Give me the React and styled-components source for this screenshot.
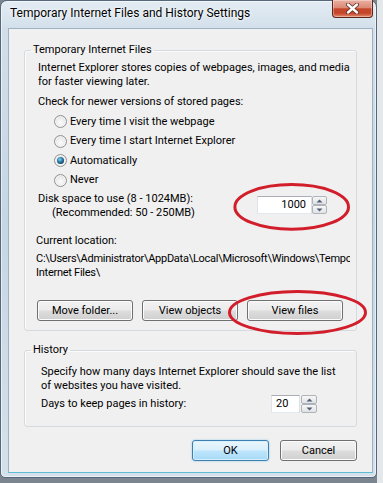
import React from "react";
import styled, { createGlobalStyle, css } from "styled-components";

const GlobalStyle = createGlobalStyle`
  html, body {
    margin: 0;
    height: 483px;
  }
  body {
    background: linear-gradient(to right, #7a858f 0, #7a858f 377px, #e4e8eb 377px);
    font-family: Roboto, "Liberation Sans", sans-serif;
    font-size: 11px;
    line-height: 14px;
    color: #000;
  }
`;

const Window = styled.div`
  position: relative;
  width: 377px;
  box-sizing: border-box;
  border: 1px solid #56687a;
  border-radius: 7px 7px 5px 5px;
  padding: 0 3px 4px 7px;
  background: linear-gradient(to bottom, #e3ecf3 0px, #d2dfea 28px, #c6d6e3 220px, #d4e1eb 100%);
  box-shadow: inset 0 0 0 1px rgba(255, 255, 255, 0.55);
`;

const TitleBar = styled.div`
  height: 27px;
  display: flex;
  align-items: flex-start;
  justify-content: space-between;
  margin-right: -2px;
`;

const Title = styled.span`
  font-size: 12px;
  line-height: 14px;
  padding: 5px 0 0 2px;
  text-shadow: 0 0 5px #fff, 0 0 2px #fff;
`;

const CloseButton = styled.div`
  width: 41px;
  height: 18px;
  margin: -1px 2px 0 0;
  box-sizing: border-box;
  border: 1px solid #5e2519;
  border-top: none;
  border-radius: 0 0 4px 4px;
  background: linear-gradient(to bottom, #eab0a2 0%, #dc8a76 45%, #c4462b 52%, #c6482c 78%, #e18a6d 100%);
  box-shadow: inset 0 0 0 1px rgba(255, 255, 255, 0.35);
  display: flex;
  align-items: center;
  justify-content: center;
`;

const Client = styled.div`
  background: #f0f0f0;
  border: 1px solid #9fb2c3;
  border-bottom-color: #5bbdd4;
  padding: 14px 15px 11px;
`;

const Group = styled.fieldset`
  margin: ${(p) => p.$top || 0}px 0 0;
  padding: 0;
  min-width: 0;
  border: 1px solid #d3dbe1;
  border-radius: 3px;
  box-shadow: inset 1px 1px 0 #fbfbfb;
`;

const Legend = styled.legend`
  margin-left: 6px;
  padding: 0 2px;
  line-height: 14px;
`;

const GroupBody = styled.div`
  padding: ${(p) => p.$pad};
`;

const Line = styled.div`
  white-space: nowrap;
  margin-top: ${(p) => p.$top || 0}px;
  padding-left: ${(p) => p.$indent || 0}px;
`;

const RadioList = styled.div`
  margin-top: 2.75px;
`;

const RadioRow = styled.div`
  display: flex;
  align-items: center;
  gap: 3px;
  height: 19.5px;
  padding-left: 16px;
`;

const RadioDot = styled.span`
  position: relative;
  width: 13px;
  height: 13px;
  box-sizing: border-box;
  border-radius: 50%;
  border: 1px solid #929292;
  background: radial-gradient(circle at 50% 60%, #fbfbfb 0, #eeeeee 45%, #d4d4d4 100%);
  box-shadow: inset 0 0 0 1px #f4f4f4;
  ${(p) =>
    p.$checked &&
    css`
      &::after {
        content: "";
        position: absolute;
        left: 2px;
        top: 2px;
        width: 7px;
        height: 7px;
        border-radius: 50%;
        background: radial-gradient(circle at 40% 35%, #86d3f2 0, #2d7eab 40%, #0b2f4a 85%);
      }
    `}
`;

const SpaceRow = styled.div`
  display: flex;
  margin-top: 2.5px;
`;

const Spin = styled.div`
  display: flex;
  height: 18px;
  margin: ${(p) => p.$margin};
`;

const SpinField = styled.div`
  width: ${(p) => p.$w}px;
  box-sizing: border-box;
  border: 1px solid #abadb3;
  border-color: #abadb3 #dbdfe6 #e3e9ef #e2e3ea;
  background: #fff;
  line-height: 16px;
  text-align: ${(p) => p.$align};
  padding: 0 ${(p) => (p.$align === "right" ? 5 : 0)}px 0 ${(p) => (p.$align === "left" ? 4 : 0)}px;
`;

const SpinButtons = styled.div`
  display: flex;
  flex-direction: column;
  width: ${(p) => p.$w}px;
  margin-left: ${(p) => p.$gap || 0}px;
`;

const SpinBtn = styled.div`
  flex: 1;
  box-sizing: border-box;
  border: 1px solid #aeb4bb;
  border-radius: 2px;
  background: linear-gradient(to bottom, #f7f7f7, #e2e2e2);
  display: flex;
  align-items: center;
  justify-content: center;
`;

const Location = styled.div`
  margin: 14px 0 0 -2px;
`;

const PathText = styled.div`
  margin-top: 4px;
  width: 314px;
  overflow: hidden;
  letter-spacing: -0.26px;
`;

const ButtonRow = styled.div`
  display: flex;
  gap: ${(p) => p.$gap}px;
  margin: ${(p) => p.$margin};
  justify-content: ${(p) => p.$justify || "flex-start"};
`;

const Button = styled.div`
  width: ${(p) => p.$w}px;
  height: 21px;
  box-sizing: border-box;
  border: 1px solid #707070;
  border-radius: 3px;
  background: linear-gradient(to bottom, #f2f2f2 0%, #ebebeb 48%, #dddddd 52%, #cfcfcf 100%);
  box-shadow: inset 0 0 0 1px #fbfbfb;
  display: flex;
  align-items: center;
  justify-content: center;
  line-height: 14px;
  ${(p) =>
    p.$default &&
    css`
      border-color: #3c7fb1;
      background: linear-gradient(to bottom, #eaf6fd 0%, #d9f0fc 48%, #bee6fd 52%, #a7d9f5 100%);
      box-shadow: inset 0 0 0 1px #d7f0fc, 0 0 2px rgba(76, 170, 220, 0.6);
    `}
`;

const DaysRow = styled.div`
  display: flex;
  align-items: center;
  height: 18px;
  margin-top: 2px;
`;

const Marks = styled.svg`
  position: absolute;
  left: -1px;
  top: -1px;
  pointer-events: none;
`;

const Arrow = ({ up }) => (
  <svg width="7" height="4" viewBox="0 0 7 4">
    <path d={up ? "M0.5 3.5 L3.5 0.5 L6.5 3.5 Z" : "M0.5 0.5 L3.5 3.5 L6.5 0.5 Z"} fill="#4d5f7a" />
  </svg>
);

const Spinner = ({ value, field, buttons, gap, align, margin }) => (
  <Spin $margin={margin}>
    <SpinField $w={field} $align={align}>
      {value}
    </SpinField>
    <SpinButtons $w={buttons} $gap={gap}>
      <SpinBtn>
        <Arrow up />
      </SpinBtn>
      <SpinBtn>
        <Arrow />
      </SpinBtn>
    </SpinButtons>
  </Spin>
);

const radios = [
  ["Every time I visit the webpage", false],
  ["Every time I start Internet Explorer", false],
  ["Automatically", true],
  ["Never", false],
];

export default function App() {
  return (
    <>
      <GlobalStyle />
      <Window>
        <TitleBar>
          <Title>Temporary Internet Files and History Settings</Title>
          <CloseButton>
            <svg width="15" height="11" viewBox="0 0 15 11">
              <path d="M3 1.5 L12 9.5 M12 1.5 L3 9.5" stroke="#5a2a22" strokeWidth="4" strokeLinecap="round" />
              <path d="M3 1.5 L12 9.5 M12 1.5 L3 9.5" stroke="#fff" strokeWidth="2.4" strokeLinecap="round" />
            </svg>
          </CloseButton>
        </TitleBar>
        <Client>
          <Group>
            <Legend>Temporary Internet Files</Legend>
            <GroupBody $pad="4px 13px 9px 13px">
              <Line>Internet Explorer stores copies of webpages, images, and media</Line>
              <Line>for faster viewing later.</Line>
              <Line $top={6}>Check for newer versions of stored pages:</Line>
              <RadioList>
                {radios.map(([label, checked]) => (
                  <RadioRow key={label}>
                    <RadioDot $checked={checked} />
                    {label}
                  </RadioRow>
                ))}
              </RadioList>
              <SpaceRow>
                <div>
                  <Line>Disk space to use (8 - 1024MB):</Line>
                  <Line $indent={14}>(Recommended: 50 - 250MB)</Line>
                </div>
                <Spinner value="1000" field={55} buttons={15} align="right" margin="4px 16px 0 auto" />
              </SpaceRow>
              <Location>
                <div>Current location:</div>
                <PathText>C:\Users\Administrator\AppData\Local\Microsoft\Windows\Temporary Internet Files\</PathText>
              </Location>
              <ButtonRow $gap={9} $margin="20px 0 0 -1px">
                <Button $w={96}>Move folder...</Button>
                <Button $w={96}>View objects</Button>
                <Button $w={96}>View files</Button>
              </ButtonRow>
            </GroupBody>
          </Group>
          <Group $top={12}>
            <Legend>History</Legend>
            <GroupBody $pad="8px 13px 13px 16px">
              <Line>Specify how many days Internet Explorer should save the list</Line>
              <Line>of websites you have visited.</Line>
              <DaysRow>
                Days to keep pages in history:
                <Spinner value="20" field={29} buttons={16} gap={1} align="left" margin="0 26px 0 auto" />
              </DaysRow>
            </GroupBody>
          </Group>
          <ButtonRow $gap={11} $margin="13px 0 0" $justify="flex-end">
            <Button $w={77} $default>
              OK
            </Button>
            <Button $w={77}>Cancel</Button>
          </ButtonRow>
        </Client>
        <Marks width="383" height="483">
          <ellipse cx="291.7" cy="206.9" rx="56.8" ry="22.3" fill="none" stroke="#d21e2b" strokeWidth="3" />
          <ellipse cx="297.5" cy="312.5" rx="68" ry="21" fill="none" stroke="#d21e2b" strokeWidth="3" />
        </Marks>
      </Window>
    </>
  );
}
